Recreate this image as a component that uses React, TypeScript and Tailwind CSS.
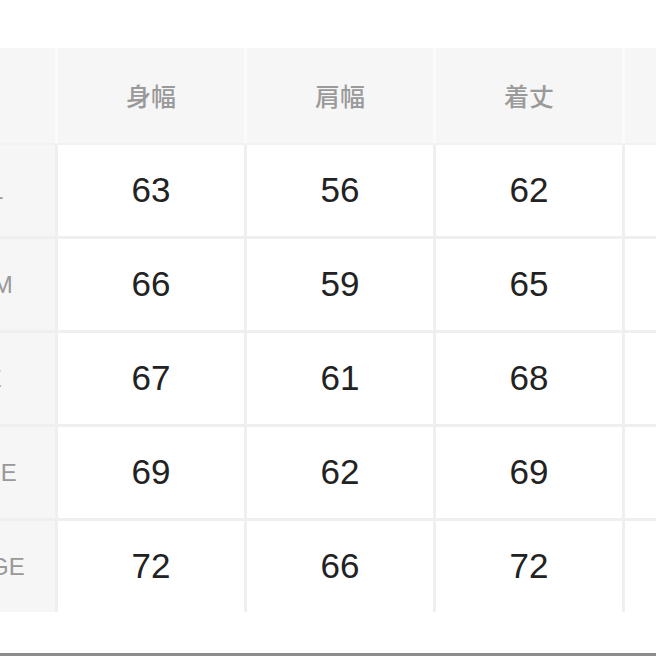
const headers = ['身幅', '肩幅', '着丈', '袖丈'];

const rows: { size: string; values: number[] }[] = [
  { size: 'SMALL', values: [63, 56, 62, 20] },
  { size: 'MEDIUM', values: [66, 59, 65, 21] },
  { size: 'LARGE', values: [67, 61, 68, 22] },
  { size: 'X-LARGE', values: [69, 62, 69, 23] },
  { size: 'XX-LARGE', values: [72, 66, 72, 24] },
];

const cols = 'grid grid-cols-[182px_186px_186px_186px_186px] gap-[3px]';

export default function App() {
  return (
    <div className="relative w-[656px] h-[656px] overflow-hidden bg-white font-['Liberation_Sans','Noto_Sans_CJK_JP',sans-serif]">
      <div className="pt-[48px]">
        <div className="ml-[-127px] w-[960px] flex flex-col gap-[2px] bg-[#f2f2f2]">
          <div className={`${cols} bg-[#fbfbfb]`}>
            <div className="h-[95px] bg-[#f6f6f6]" />
            {headers.map((h) => (
              <div
                key={h}
                className="h-[95px] bg-[#f6f6f6] flex items-center justify-center text-[25px] text-[#9a9a9a] font-['Noto_Sans_CJK_JP',sans-serif] font-medium"
              >
                {h}
              </div>
            ))}
          </div>
          <div className={`${cols} bg-[#efefef]`}>
            {rows.map((r) => (
              <div key={r.size} className="contents">
                <div className="h-[91px] bg-[#f6f6f6] flex items-center justify-center text-[24px] text-[#999] font-medium">
                  <span className={r.size === 'LARGE' ? 'mr-[6px]' : ''}>{r.size}</span>
                </div>
                {r.values.map((v, i) => (
                  <div
                    key={i}
                    className="h-[91px] bg-white flex items-center justify-center text-[35px] text-[#222]"
                  >
                    {v}
                  </div>
                ))}
              </div>
            ))}
          </div>
        </div>
      </div>
      <div className="absolute left-0 right-0 bottom-0 h-[3px] bg-[#8c8c8c]" />
    </div>
  );
}
